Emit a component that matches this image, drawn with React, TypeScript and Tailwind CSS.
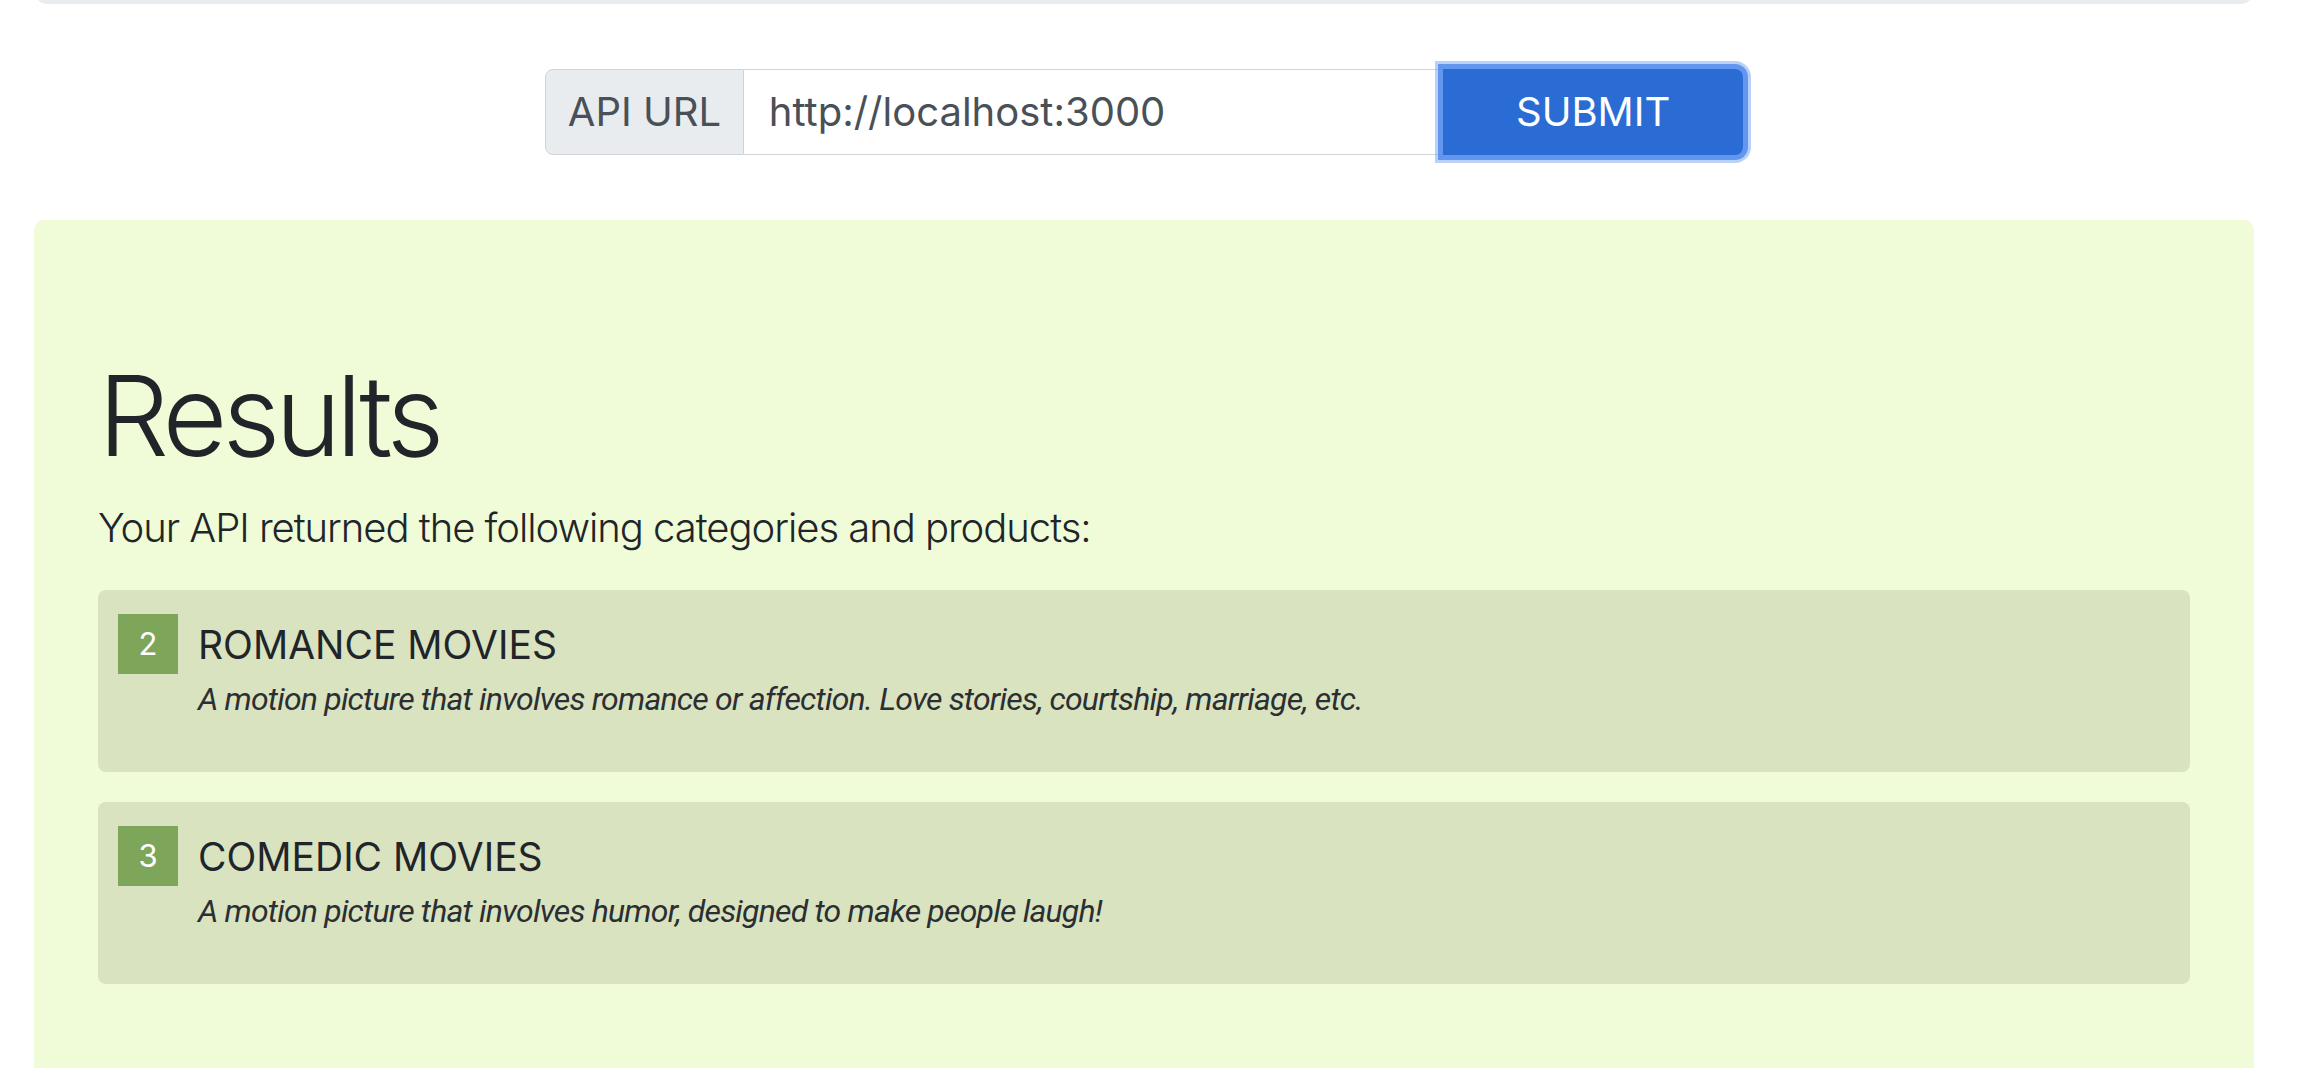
import { useState } from "react";

const categories = [
  {
    id: 2,
    name: "ROMANCE MOVIES",
    description:
      "A motion picture that involves romance or affection. Love stories, courtship, marriage, etc.",
  },
  {
    id: 3,
    name: "COMEDIC MOVIES",
    description:
      "A motion picture that involves humor, designed to make people laugh!",
  },
];

function App() {
  const [apiUrl, setApiUrl] = useState("http://localhost:3000");

  return (
    <div className="min-h-screen bg-white pr-[10px] font-['Inter','Liberation_Sans',sans-serif] text-[#212529]">
      {/* bottom edge of the header card, scrolled mostly out of view */}
      <div className="mx-[36px] h-[4px] overflow-hidden">
        <div className="-mt-[16px] h-[20px] rounded-[10px] bg-[#e9ecef]" />
      </div>

      <form
        className="mt-[65px] flex justify-center"
        onSubmit={(e) => e.preventDefault()}
      >
        <div className="flex h-[86px] w-[1198px]">
          <span className="flex w-[199px] items-center justify-center rounded-l-[8px] border border-[#ced4da] bg-[#e9ecef] text-[40px] leading-[1.5] text-[#495057]">
            API URL
          </span>
          <input
            type="text"
            value={apiUrl}
            onChange={(e) => setApiUrl(e.target.value)}
            className="w-[700px] border-y border-[#ced4da] bg-white px-[25px] text-[40px] text-[#495057] outline-none"
          />
          <button
            type="submit"
            className="w-[300px] rounded-r-[8px] bg-[#2a6cd4] text-[40px] text-white shadow-[0_0_0_5px_#6397ef,0_0_0_8px_rgba(99,151,239,0.45)]"
          >
            SUBMIT
          </button>
        </div>
      </form>

      <section className="mx-[34px] mt-[65px] rounded-[10px] bg-[#f0fcd7] px-[64px] pb-[128px] pt-[128px]">
        <h1 className="mb-[16px] text-[112px] font-light leading-[1.2] tracking-[-0.045em]">
          Results
        </h1>
        <p className="mb-[32px] text-[40px] font-light leading-[1.5] tracking-[-0.026em]">
          Your API returned the following categories and products:
        </p>

        <div className="flex flex-col gap-[30px]">
          {categories.map((cat) => (
            <div
              key={cat.id}
              className="flex h-[182px] items-start gap-[20px] rounded-[8px] bg-[#d9e3c0] px-[20px] pt-[24px]"
            >
              <span className="flex h-[60px] w-[60px] shrink-0 items-center justify-center bg-[#7da65a] text-[31px] text-white">
                {cat.id}
              </span>
              <div className="flex flex-col">
                <h5 className="mt-[8px] text-[39px] leading-[1.2]">
                  {cat.name}
                </h5>
                <p className="mt-[6px] font-['Roboto','Liberation_Sans',sans-serif] text-[32px] italic leading-[1.5] tracking-[-0.025em] text-[#2b2f33]">
                  {cat.description}
                </p>
              </div>
            </div>
          ))}
        </div>
      </section>
    </div>
  );
}

export default App;
